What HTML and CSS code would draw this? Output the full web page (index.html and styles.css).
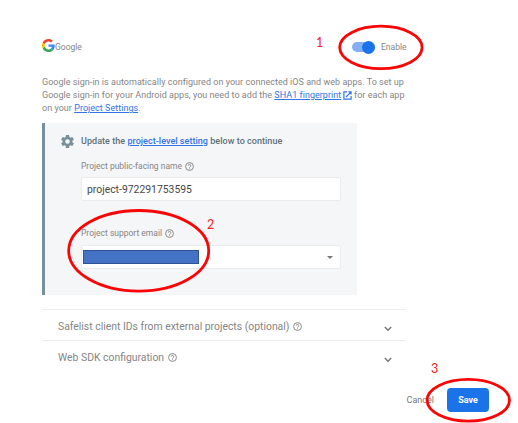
FILE: index.html
```html
<!DOCTYPE html>
<html lang="en">
<head>
<meta charset="utf-8">
<title>Google sign-in</title>
<link rel="stylesheet" href="styles.css">
</head>
<body>
<svg class="defs" width="0" height="0" aria-hidden="true">
  <symbol id="help" viewBox="0 0 24 24"><circle cx="12" cy="12" r="10.500" fill="none" stroke="currentColor" stroke-width="2.500"/><path d="M8.500 9.800a3.500 3.500 0 1 1 5.300 2.900C12.600 13.500 12 14 12 15.200" fill="none" stroke="currentColor" stroke-width="2.400"/><circle cx="12" cy="18" r="1.400" fill="currentColor"/></symbol>
  <symbol id="chevron" viewBox="0 0 8 6"><path d="M.8 1.100L4 4.300l3.200-3.200" fill="none" stroke="currentColor" stroke-width="1.400"/></symbol>
</svg>
<main class="page">
  <header class="provider">
    <svg class="logo" viewBox="0 0 48 48"><path fill="#EA4335" d="M24 9.500c3.540 0 6.710 1.220 9.210 3.600l6.850-6.850C35.900 2.380 30.470 0 24 0 14.620 0 6.510 5.380 2.560 13.220l7.980 6.190C12.430 13.720 17.740 9.500 24 9.500z"/><path fill="#4285F4" d="M46.980 24.550c0-1.570-.15-3.090-.38-4.550H24v9.020h12.940c-.58 2.960-2.260 5.480-4.780 7.180l7.730 6c4.510-4.180 7.090-10.360 7.090-17.650z"/><path fill="#FBBC05" d="M10.530 28.590A14.500 14.500 0 0 1 10.530 19.410l-7.980-6.190a24 24 0 0 0 0 21.560z"/><path fill="#34A853" d="M24 48c6.480 0 11.930-2.130 15.890-5.810l-7.730-6c-2.150 1.450-4.920 2.300-8.160 2.300-6.260 0-11.570-4.220-13.470-9.910l-7.980 6.190C6.510 42.620 14.620 48 24 48z"/></svg>
    <span class="brand">Google</span>
    <span class="switch"><span class="knob"></span></span>
    <span class="enable">Enable</span>
  </header>
  <p class="intro">
    <span class="line">Google sign-in is automatically configured on your connected iOS and web apps. To set up</span>
    <span class="line">Google sign-in for your Android apps, you need to add the <a>SHA1 fingerprint</a><svg class="ext" viewBox="0 0 10 10"><path d="M4.500 1H1v8h8V5.500M6 1h3v3M9 1L3.300 6.700" fill="none" stroke="currentColor" stroke-width="1.300"/></svg> for each app</span>
    <span class="line">on your <a>Project Settings</a>.</span>
  </p>
  <section class="panel">
    <div class="notice">
      <svg class="gear" viewBox="2 2 20 20"><path fill="currentColor" fill-rule="evenodd" d="M19.430 12.980c.04-.32.07-.64.07-.98s-.03-.66-.07-.98l2.110-1.650c.19-.15.24-.42.12-.64l-2-3.460c-.12-.22-.39-.3-.61-.22l-2.490 1c-.52-.4-1.080-.73-1.690-.98l-.38-2.650A.488.488 0 0 0 14 2h-4c-.25 0-.46.18-.49.42l-.38 2.650c-.61.25-1.170.59-1.690.98l-2.490-1c-.23-.09-.49 0-.61.22l-2 3.460c-.13.22-.07.49.12.64l2.110 1.650c-.04.32-.07.65-.07.98s.03.66.07.98l-2.110 1.650c-.19.15-.24.42-.12.64l2 3.460c.12.22.39.3.61.22l2.490-1c.52.4 1.080.73 1.690.98l.38 2.650c.03.24.24.42.49.42h4c.25 0 .46-.18.49-.42l.38-2.650c.61-.25 1.170-.59 1.690-.98l2.490 1c.23.09.49 0 .61-.22l2-3.460c.12-.22.07-.49-.12-.64zM12 15.500a3.500 3.500 0 1 1 0-7 3.500 3.500 0 0 1 0 7z"/></svg>
      <span>Update the <a>project-level setting</a> below to continue</span>
    </div>
    <div class="label name-label"><span>Project public-facing name</span><svg class="help"><use href="#help"/></svg></div>
    <div class="field"><span>project-972291753595</span></div>
    <div class="label mail-label"><span>Project support email</span><svg class="help"><use href="#help"/></svg></div>
    <div class="field select"><span class="masked"></span><span class="caret"></span></div>
  </section>
  <section class="accordion">
    <div class="row"><span>Safelist client IDs from external projects (optional)</span><svg class="help"><use href="#help"/></svg><svg class="chevron"><use href="#chevron"/></svg></div>
    <div class="row"><span>Web SDK configuration</span><svg class="help"><use href="#help"/></svg><svg class="chevron"><use href="#chevron"/></svg></div>
  </section>
  <footer class="actions"><span class="cancel">Cancel</span><span class="save">Save</span></footer>
</main>
<svg class="marks" viewBox="0 0 518 423"><g fill="none" stroke="#fa0505" stroke-width="2.800"><ellipse cx="380.900" cy="47.400" rx="41.200" ry="21.200"/><ellipse cx="138.700" cy="250.800" rx="70" ry="40.300"/><ellipse cx="468.300" cy="400.300" rx="41.200" ry="20.900"/></g></svg>
<span class="step one">1</span><span class="step two">2</span><span class="step three">3</span>
</body>
</html>
```

FILE: styles.css
```css
* { box-sizing: border-box; }
body { margin: 0; width: 518px; height: 423px; overflow: hidden; position: relative; background: #fff; color: #858585; font: 9px/13px Roboto, sans-serif; }
.defs { position: absolute; }
a { color: #3273e8; text-decoration: underline; }
.page { width: 448px; margin-left: 42px; padding-top: 38px; }
.provider { display: flex; align-items: center; width: 364px; height: 18px; }
.logo { width: 13px; height: 13px; margin-top: -3px; }
.brand { font-size: 8.500px; margin-right: auto; }
.switch { width: 23px; height: 10px; border-radius: 5px; background: #84aff5; display: flex; align-items: center; justify-content: flex-end; }
.knob { width: 13px; height: 13px; border-radius: 50%; background: #1a73e8; flex: none; }
.enable { width: 25px; margin-left: 6px; font-size: 8.500px; }
.intro { margin: 20px 0 0; letter-spacing: .033px; }
.line { display: block; white-space: nowrap; }
.ext { width: 9px; height: 9px; margin-left: 1.500px; vertical-align: -1.500px; color: #3273e8; }
.panel { width: 315px; height: 172px; margin-top: 8px; padding: 11px 16px 0 36px; border-left: 3px solid #78909c; background: #f5f6f8; }
.notice { display: flex; align-items: center; height: 15px; margin-left: -20px; color: #607078; font-weight: 500; letter-spacing: .04px; white-space: nowrap; }
.gear { width: 13px; height: 13px; margin-right: 7px; color: #78909c; }
.label { display: flex; align-items: center; font-size: 8.500px; height: 13px; }
.help { width: 9px; height: 9px; margin-left: 3.500px; overflow: visible; }
.label .help { margin-left: 3px; }
.name-label { margin-top: 11px; }
.field { width: 260px; height: 24px; margin-top: 4px; padding: 0 5px; display: flex; align-items: center; border: 1px solid #eaebec; border-radius: 2px; background: #fff; color: #484848; font-size: 10.400px; }
.mail-label { margin-top: 26px; }
.select { margin-top: 5px; padding: 0 7px 0 1px; justify-content: space-between; }
.masked { width: 116px; height: 14px; border: 1px solid #2f5294; background: #4472c4; }
.caret { border: 3.500px solid transparent; border-top-color: #777; border-bottom: 0; }
.accordion { width: 364px; margin-top: 14px; }
.row { display: flex; align-items: center; height: 31px; padding: 2px 14px 0 16px; border-top: 1px solid #ececec; font-size: 10.400px; border-radius: 2px 2px 0 0; }
.chevron { width: 8px; height: 6px; margin-left: auto; margin-top: 5px; color: #757575; }
.actions { display: flex; align-items: center; justify-content: flex-end; height: 24px; margin-top: 17px; width: 447px; }
.cancel { margin-right: 13px; color: #777; }
.save { width: 42px; height: 24px; border-radius: 4px; background: #1a73e8; color: #fff; font-weight: 700; text-align: center; line-height: 24px; }
.marks { position: absolute; left: 0; top: 0; width: 518px; height: 423px; }
.step { position: absolute; color: #f52020; font: 12.500px/14px Lato, sans-serif; }
.one { left: 316px; top: 36px; }
.two { left: 207px; top: 218px; }
.three { left: 431px; top: 362px; }
```
